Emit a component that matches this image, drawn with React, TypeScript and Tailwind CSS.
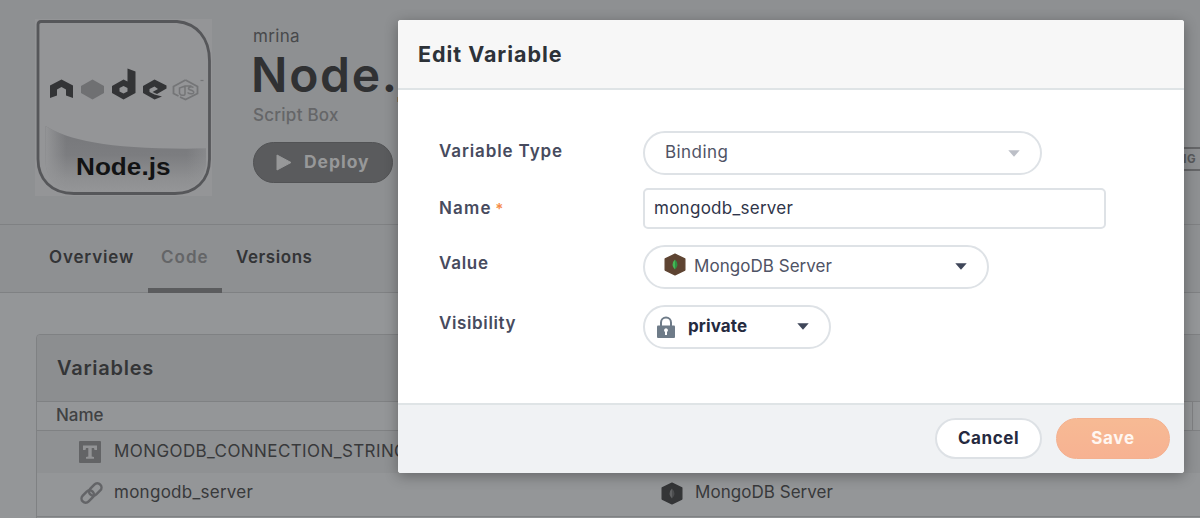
import React from 'react';

function NodeLogo() {
  return (
    <svg viewBox="0 0 178 177" className="h-[177px] w-[178px] shrink-0">
      <defs>
        <linearGradient id="swoosh" x1="0" y1="0" x2="0" y2="1">
          <stop offset="0" stopColor="#76777a" />
          <stop offset="0.45" stopColor="#7c7d80" />
          <stop offset="0.8" stopColor="#8e8f91" />
          <stop offset="1" stopColor="#949597" />
        </linearGradient>
        <linearGradient id="fade" x1="0" y1="0" x2="1" y2="0">
          <stop offset="0" stopColor="#949597" />
          <stop offset="0.13" stopColor="#949597" stopOpacity="0" />
          <stop offset="0.88" stopColor="#949597" stopOpacity="0" />
          <stop offset="1" stopColor="#949597" stopOpacity="0.5" />
        </linearGradient>
      </defs>
      <rect width="177" height="177" fill="#949597" />
      <path d="M10.500 107C35 122 78 131 171 129.500V142C171 158 160 172 140 172H38C22 172 10.500 158 10.500 142Z" fill="url(#swoosh)" />
      <path d="M10.500 107C35 122 78 131 171 129.500V142C171 158 160 172 140 172H38C22 172 10.500 158 10.500 142Z" fill="url(#fade)" />
      <path d="M6 2.500H142C162 4.500 174.500 19 174.500 42V140C174.500 162 160 174.500 140 174.500H39C16 174.500 3 160 3 140V5.500Q3 2.500 6 2.500Z" fill="none" stroke="#56575a" strokeWidth="2.800" />
      <path d="M15 66.500 26.500 60.500 38 66.500V79L31 76.500V70.500L26.500 68 22 70.500V76.500L15 79Z" fill="#333436" />
      <path d="M57.500 60.500 69 67V74L57.500 80.500 46 74V67Z" fill="#6f7072" />
      <path fillRule="evenodd" d="M92.500 49.500 100.500 52.500V74L88.500 80.500 77 74V67L88.500 60.500 92.500 62.500ZM88.500 67 84.500 69V72.500L88.500 74.500 92.500 72.500V69Z" fill="#333436" />
      <path d="M119.500 60.500 131.500 66.500V69.500L122 75 117.500 73 123 70 119.500 67.500 114.500 70V73L119.500 75.500 127 77.500 119.500 80.500 108 74V67Z" fill="#333436" />
      <path d="M150.500 61 162.500 67.500V74.500L150.500 80.500 145 78M143.500 77 138.500 74.500V67.500L150.500 61" fill="none" stroke="#747577" strokeWidth="1.800" />
      <path d="M150 67V75Q150 77 146 76L144.500 74.500V69L150 67H156.500M158.500 68.500Q157 67.500 155 68 152.500 69.500 154 70.500L157 71.500Q160 73 158 74.500 155 75.500 152.500 73.500" fill="none" stroke="#747577" strokeWidth="1.500" />
      <path d="M165.500 61.500H168.500" stroke="#747577" strokeWidth="1.200" />
      <text x="41" y="156" textLength="94.500" lengthAdjust="spacingAndGlyphs" fontSize="23" fontWeight="700" fill="#121314" fontFamily="'Liberation Sans', sans-serif">Node.js</text>
    </svg>
  );
}

function MongoIcon({ hex, left, right }: { hex: string; left: string; right: string }) {
  return (
    <svg viewBox="0 0 22 23" className="h-[23px] w-[22px] shrink-0">
      <path d="M11 1.200 20.800 6V17L11 21.800 1.200 17V6Z" fill={hex} stroke={hex} strokeWidth="1.400" strokeLinejoin="round" />
      <path d="M11 6.500Q8.200 9 8.500 12 8.800 14.500 11 16.500Z" fill={left} />
      <path d="M11 6.500Q13.800 9 13.500 12 13.200 14.500 11 16.500Z" fill={right} />
    </svg>
  );
}

function Caret({ color }: { color: string }) {
  return (
    <svg viewBox="0 0 12 7" className="h-[7px] w-3 shrink-0">
      <path d="M.3.300H11.700L6 6.800Z" fill={color} />
    </svg>
  );
}

function Header() {
  return (
    <header className="flex h-[225px] shrink-0 border-b border-[#7f8183] bg-[#8e9092] pt-[19px] pl-[35px]">
      <NodeLogo />
      <div className="ml-[40px] pt-[5px]">
        <div className="text-[17px] leading-6 tracking-[0.32px] text-[#48494b]">mrina</div>
        <h1 className="-ml-[2px] h-[55px] whitespace-nowrap text-[48px] leading-[53px] font-semibold tracking-[1.7px] text-[#303133]">
          Node.js Todo App
        </h1>
        <div className="text-[17px] leading-6 font-medium tracking-[0.25px] text-[#656668]">Script Box</div>
        <button className="mt-[15px] flex h-[41px] w-[140px] items-center rounded-full border border-[#525355] bg-[#5a5b5d] pl-[22px] text-[17.5px] font-bold tracking-[0.95px] text-[#979899]">
          <svg viewBox="0 0 16 17" className="mr-[12px] h-[17px] w-4">
            <path d="M1 1 15 8.500 1 16Z" fill="#979899" stroke="#979899" strokeLinejoin="round" />
          </svg>
          Deploy
        </button>
      </div>
      <div className="mt-[128px] -mr-[19px] ml-auto h-[24px] w-[90px] shrink-0 rounded-[12px] border-2 border-[#656668] pl-[10px] text-[11.5px] leading-5 font-bold tracking-[0.4px] text-[#58595b]">
        PENDING
      </div>
    </header>
  );
}

function Tabs() {
  return (
    <nav className="flex h-[68px] shrink-0 border-b border-[#7f8183] bg-[#8e9092] pl-[36px] text-[17px] leading-[64px] font-semibold text-[#333436]">
      <span className="w-[112px] pl-[13px] tracking-[0.85px]">Overview</span>
      <span className="h-[68px] w-[74px] border-b-[5px] border-[#5b5c5e] pl-[13px] tracking-[1px] text-[#646567]">Code</span>
      <span className="pl-[14px] tracking-[0.55px]">Versions</span>
    </nav>
  );
}

function VariablesTable() {
  return (
    <section className="mt-[41px] ml-[36px] w-[1180px] rounded-tl border border-[#7f8183] text-[17px] text-[#38393b]">
      <h2 className="h-[67px] rounded-tl border-b border-[#7f8183] bg-[#8c8e90] pl-[20px] text-[20px] leading-[66px] font-semibold tracking-[0.75px] text-[#343537]">
        Variables
      </h2>
      <div className="flex h-[29px] border-b border-[#7f8183] leading-[26px] font-medium text-[#404143]">
        <span className="w-[624px] pl-[19px]">Name</span>
        <span className="w-[532px] border-r border-[#7f8183]">Value</span>
      </div>
      <div className="flex h-[42px] items-center bg-[#8f9193] pl-[42px]">
        <svg viewBox="0 0 22 22" className="mr-[13px] mb-px h-[22px] w-[22px]">
          <rect width="22" height="22" rx="1" fill="#636466" />
          <path d="M4 4.500H18V9H15.500L15 7H12.700V15.500L15 16V17.800H7V16L9.300 15.500V7H7L6.500 9H4Z" fill="#929395" />
        </svg>
        <span className="tracking-[0.41px]">MONGODB_CONNECTION_STRING</span>
      </div>
      <div className="flex h-[44px] items-center border-b border-[#7f8183] pb-[3px]">
        <div className="flex w-[624px] items-center pl-[42px]">
          <svg viewBox="0 0 24 24" className="mr-[11px] h-6 w-6" fill="none" stroke="#636467" strokeWidth="2.500">
            <rect x="9.300" y="4.300" width="14" height="8.400" rx="4.200" transform="rotate(-45 16.300 8.500)" />
            <rect x="1.700" y="11.300" width="14" height="8.400" rx="4.200" transform="rotate(-45 8.700 15.500)" />
          </svg>
          <span className="tracking-[0.27px]">mongodb_server</span>
        </div>
        <MongoIcon hex="#343537" left="#606163" right="#4c4d4f" />
        <span className="ml-[12px] tracking-[0.04px]">MongoDB Server</span>
      </div>
      <div className="h-10 bg-[#8f9193]" />
    </section>
  );
}

const pill = 'flex h-[44px] items-center rounded-full border-2 border-[#dee2e6] bg-white';

function EditDialog() {
  return (
    <div className="flex h-[453px] w-[786px] flex-col overflow-hidden rounded-[3px] bg-white shadow-[0_3px_14px_rgba(0,0,0,0.32)]">
      <div className="h-[70px] border-b-2 border-[#dfe4e6] bg-[#f7f7f7] pl-[20px] text-[21.5px] leading-[68px] font-bold tracking-[0.95px] text-[#2d3238]">
        Edit Variable
      </div>
      <div className="grid flex-1 grid-cols-[204px_1fr] content-start pt-[41px] pl-[41px] text-[17px] font-semibold text-[#474b5e]">
        <label className="h-[57px] leading-[40px] tracking-[0.88px]">Variable Type</label>
        <div className={`${pill} w-[399px] pr-[20px] pl-[20px]`}>
          <span className="flex-1 pb-px font-normal tracking-[0.44px] text-[#4f5365]">Binding</span>
          <Caret color="#bcbfc7" />
        </div>
        <label className="h-[57px] leading-[40px] tracking-[1.2px]">
          Name <span className="relative -left-[2px] text-[15px] text-[#f58a47]">*</span>
        </label>
        <input
          className="h-[41px] w-[463px] rounded-[5px] border-2 border-[#dee2e6] bg-white pb-px pl-[9px] font-normal tracking-[0.27px] text-[#30354a] outline-none"
          defaultValue="mongodb_server"
        />
        <label className="h-[60px] leading-[36px] tracking-[0.74px]">Value</label>
        <div className={`${pill} w-[346px] pr-[20px] pl-[19px]`}>
          <span className="mb-[5px] flex"><MongoIcon hex="#5e4432" left="#45b854" right="#2f9244" /></span>
          <span className="ml-[8px] flex-1 font-normal tracking-[0.04px] text-[#4f5365]">MongoDB Server</span>
          <span className="flex pb-px"><Caret color="#3f4659" /></span>
        </div>
        <label className="h-[60px] leading-[36px] tracking-[0.62px]">Visibility</label>
        <div className={`${pill} w-[188px] pr-[20px] pl-[12px]`}>
          <svg viewBox="0 0 18 22" className="h-[22px] w-[18px]">
            <path d="M4 10V6.500a5 5 0 0 1 10 0V10" fill="none" stroke="#6e7b88" strokeWidth="2" />
            <rect y="9.500" width="18" height="12.500" rx="1" fill="#6e7b88" />
            <path d="M9 12.300a2 2 0 0 1 1 3.700V19H8V16a2 2 0 0 1 1-3.700Z" fill="#fff" />
          </svg>
          <span className="ml-[13px] flex-1 font-bold tracking-[0.11px] text-[#252a40]">private</span>
          <span className="flex pb-px"><Caret color="#3f4659" /></span>
        </div>
      </div>
      <div className="flex h-[70px] items-start justify-end gap-[14px] border-t-2 border-[#dfe4e6] bg-[#f0f2f4] pt-[13px] pr-[14px] text-[17px] font-bold">
        <button className="h-[41px] w-[107px] rounded-full border-2 border-[#dde1e5] bg-white pt-px tracking-[0.57px] text-[#252a40]">Cancel</button>
        <button className="h-[41px] w-[114px] rounded-full border border-[#f4b190] bg-linear-to-b from-[#f7ba94] to-[#f7b292] pt-px tracking-[0.7px] text-[#fff7f1]">Save</button>
      </div>
    </div>
  );
}

export default function App() {
  return (
    <div className="relative flex h-[518px] w-[1200px] flex-col overflow-hidden bg-[#949698] font-['Inter',sans-serif]">
      <Header />
      <Tabs />
      <VariablesTable />
      <div className="absolute inset-0 flex items-start pt-[20px] pl-[398px]">
        <EditDialog />
      </div>
    </div>
  );
}
